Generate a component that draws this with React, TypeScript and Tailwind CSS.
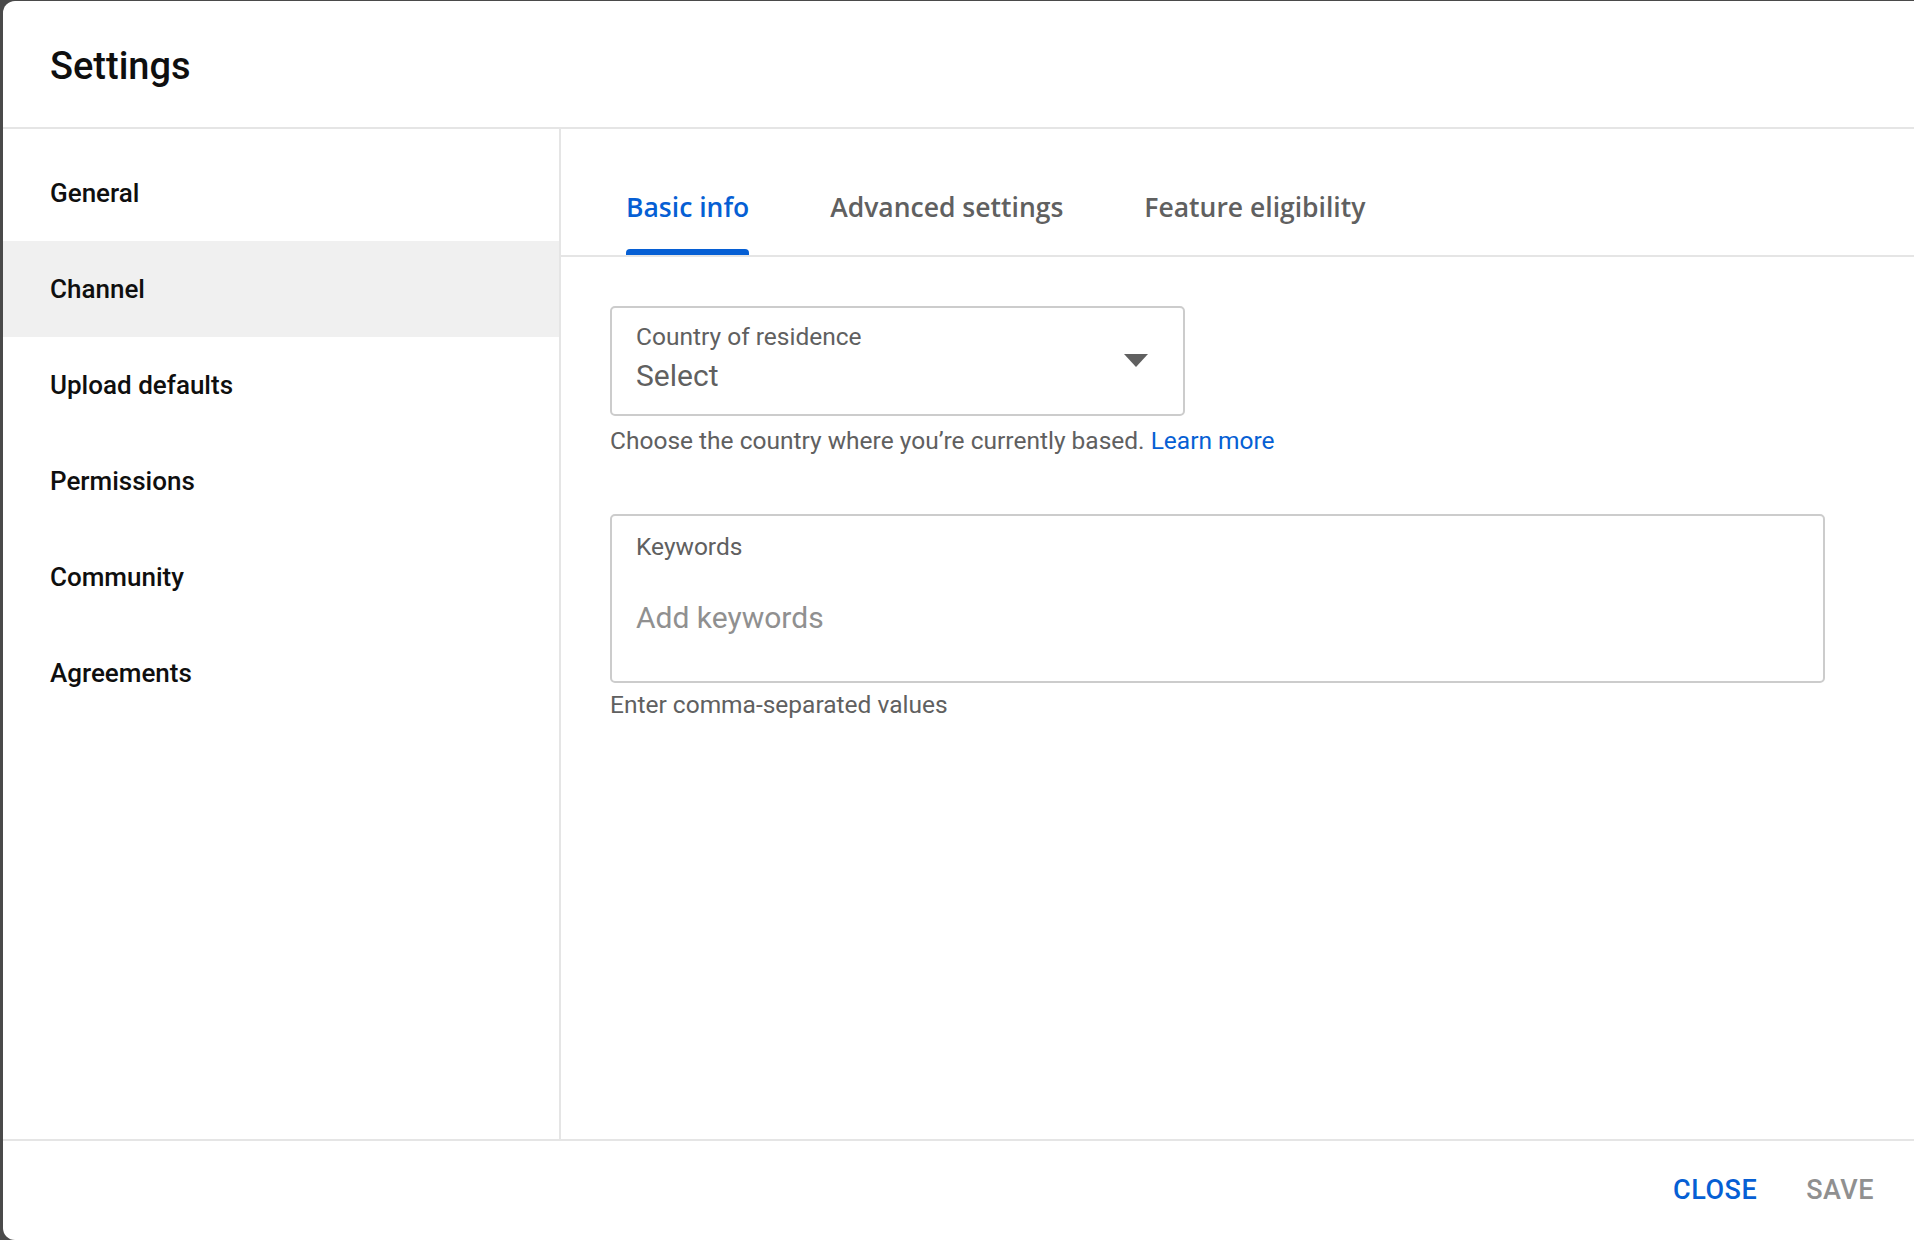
import React, { useState } from 'react';

const NAV_ITEMS = ["General", "Channel", "Upload defaults", "Permissions", "Community", "Agreements"];
const TABS = ["Basic info", "Advanced settings", "Feature eligibility"];

const roboto = { fontFamily: 'Roboto, "Liberation Sans", sans-serif' };

const Sidebar: React.FC<{ active: string; onSelect: (item: string) => void }> = ({ active, onSelect }) => (
  <nav className="w-[558px] shrink-0 border-r-2 border-[#e5e5e5] pt-[16px]">
    {NAV_ITEMS.map(item => (
      <button
        key={item}
        onClick={() => onSelect(item)}
        className={`flex h-[96px] w-full items-center pl-[47px] text-left text-[26px] font-medium text-[#0f0f0f]
          ${active === item ? 'bg-[#f0f0f0]' : 'bg-white'}`}
      >
        {item}
      </button>
    ))}
  </nav>
);

const Tabs: React.FC<{ active: string; onSelect: (tab: string) => void }> = ({ active, onSelect }) => (
  <div className="flex h-[128px] items-end gap-[81px] border-b-2 border-[#e5e5e5] pl-[65px]">
    {TABS.map(tab => (
      <button
        key={tab}
        onClick={() => onSelect(tab)}
        className="relative flex h-full items-center pt-[31px] text-[26.5px] font-semibold"
        style={{ fontFamily: '"Open Sans", "Noto Sans", sans-serif' }}
      >
        <span className={active === tab ? 'text-[#065fd4]' : 'text-[#606060]'}>{tab}</span>
        {active === tab && (
          <span className="absolute bottom-0 left-0 right-0 h-[6px] rounded-t-[4px] bg-[#065fd4]" />
        )}
      </button>
    ))}
  </div>
);

export default function App() {
  const [activeNav, setActiveNav] = useState("Channel");
  const [activeTab, setActiveTab] = useState("Basic info");

  return (
    <div className="h-[1240px] w-[1914px] overflow-hidden bg-[#4a4a4a] pl-[3px] pt-[1px]" style={roboto}>
      <div className="flex h-[1239px] flex-col overflow-hidden rounded-l-[12px] bg-white">
        <header className="flex h-[128px] shrink-0 items-center border-b-2 border-[#e5e5e5] pl-[47px] pt-[5px]">
          <h1 className="text-[38px] font-medium text-[#0f0f0f]">Settings</h1>
        </header>

        <div className="flex flex-1">
          <Sidebar active={activeNav} onSelect={setActiveNav} />

          <main className="flex-1">
            <Tabs active={activeTab} onSelect={setActiveTab} />

            <div className="pl-[49px] pr-[89px] pt-[49px]">
              <div className="relative h-[110px] w-[575px] rounded-[5px] border-2 border-[#cccccc] px-[24px] pt-[14px]">
                <div className="text-[24.5px] leading-[30px] text-[#606060]">Country of residence</div>
                <div className="mt-[6px] text-[30px] leading-[36px] text-[#606060]">Select</div>
                <svg className="absolute right-[35px] top-[46px]" width="24" height="13" viewBox="0 0 24 13">
                  <path d="M0 0 L24 0 L12 13 Z" fill="#606060" />
                </svg>
              </div>
              <p className="mt-[10px] text-[24.5px] leading-[30px] text-[#606060]">
                Choose the country where you’re currently based.{' '}
                <a href="#" className="text-[#065fd4]">Learn more</a>
              </p>

              <div className="mt-[58px] h-[169px] w-full rounded-[5px] border-2 border-[#cccccc] px-[24px] pt-[16px]">
                <div className="text-[24.5px] leading-[30px] text-[#606060]">Keywords</div>
                <input
                  placeholder="Add keywords"
                  className="mt-[38px] h-[36px] w-full bg-transparent text-[30px] leading-[36px] text-[#0f0f0f] outline-none placeholder:text-[#909090]"
                />
              </div>
              <p className="mt-[7px] text-[24.5px] leading-[30px] text-[#606060]">Enter comma-separated values</p>
            </div>
          </main>
        </div>

        <footer className="flex h-[101px] shrink-0 items-center justify-end gap-[49px] border-t-2 border-[#e5e5e5] pr-[40px]">
          <button className="text-[27px] font-medium tracking-[0.5px] text-[#065fd4]">CLOSE</button>
          <button className="text-[27px] font-medium tracking-[0.5px] text-[#909090]">SAVE</button>
        </footer>
      </div>
    </div>
  );
}
